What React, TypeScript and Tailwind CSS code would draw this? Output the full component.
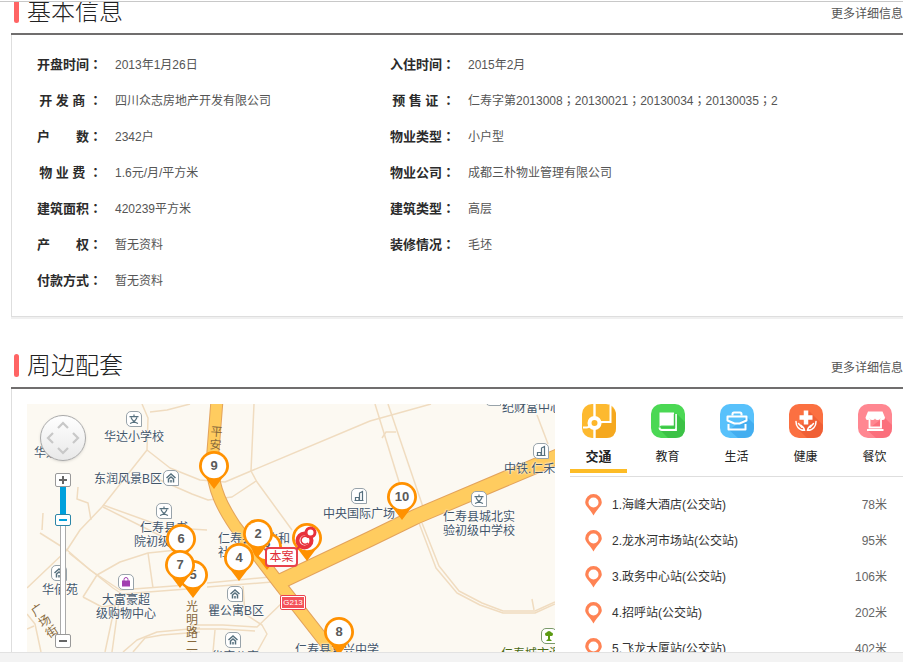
import React, { useState } from "react";

type Field = { label: string; value: string };

const fields: Field[] = [
  { label: "开盘时间：", value: "2013年1月26日" },
  { label: "入住时间：", value: "2015年2月" },
  { label: "开 发 商 ：", value: "四川众志房地产开发有限公司" },
  { label: "预 售 证 ：", value: "仁寿字第2013008；20130021；20130034；20130035；2" },
  { label: "户　　数：", value: "2342户" },
  { label: "物业类型：", value: "小户型" },
  { label: "物 业 费 ：", value: "1.6元/月/平方米" },
  { label: "物业公司：", value: "成都三朴物业管理有限公司" },
  { label: "建筑面积：", value: "420239平方米" },
  { label: "建筑类型：", value: "高层" },
  { label: "产　　权：", value: "暂无资料" },
  { label: "装修情况：", value: "毛坯" },
  { label: "付款方式：", value: "暂无资料" },
];

const stations = [
  { name: "海峰大酒店(公交站)", distance: "78米" },
  { name: "龙水河市场站(公交站)", distance: "95米" },
  { name: "政务中心站(公交站)", distance: "106米" },
  { name: "招呼站(公交站)", distance: "202米" },
  { name: "飞龙大厦站(公交站)", distance: "402米" },
];

/* Full-width colons and semicolons sit in the middle of their square. */
function CenteredPunctuation({ text }: { text: string }) {
  return (
    <>
      {text.split(/([：；])/).map((part, i) =>
        part === "：" || part === "；" ? (
          <span key={i} lang="zh-Hant" className="font-['Noto_Sans_CJK_TC',sans-serif] leading-none">
            {part}
          </span>
        ) : (
          part
        ),
      )}
    </>
  );
}

function SectionHeader({ title }: { title: string }) {
  return (
    <header className="flex h-[35px] items-start justify-between border-b-2 border-[#706e6e] pl-[3px]">
      <div className="flex items-center gap-2">
        <span className="h-[23px] w-[5px] rounded-sm bg-[#ff6464]" />
        <h2 className="text-2xl leading-[23px] font-light text-[#222]">{title}</h2>
      </div>
      <a href="#more" className="text-xs leading-7 text-[#555]">
        更多详细信息
      </a>
    </header>
  );
}

/* ---------- category icons ---------- */

function TrafficIcon() {
  return (
    <svg viewBox="0 0 34 34" className="size-[34px]">
      <rect width="34" height="34" rx="10" fill="#fdb92f" />
      <path d="M17 24l4-5h8V3q5 3 5 8v13q0 10-10 10H13v-8z" fill="#f5a81f" />
      <path d="M12.500 0v34" stroke="#fff" strokeWidth="2.400" />
      <path d="M18 18h10.500V1M1 23.500h3.500q2.500 0 3-2" fill="none" stroke="#fff" strokeWidth="2" />
      <circle cx="12.500" cy="19" r="5" fill="#fdb62b" stroke="#fff" strokeWidth="4" />
    </svg>
  );
}

function SchoolIcon() {
  return (
    <svg viewBox="0 0 34 34" className="size-[34px]">
      <rect width="34" height="34" rx="10" fill="#4bd854" />
      <path d="M26 10l8 8v6q0 10-10 10h-7l-8-8 16-1z" fill="#3cc246" />
      <path d="M8.500 8.500h14.500v13H10.500q-2 0-2 2z" fill="#fff" />
      <path d="M25 10v16H11q-2.500 0-2.500-2.500" fill="none" stroke="#fff" strokeWidth="1.800" />
      <path d="M10 23.300h13.500V10" fill="none" stroke="#3cc246" strokeWidth="1.400" />
    </svg>
  );
}

function LifeIcon() {
  return (
    <svg viewBox="0 0 34 34" className="size-[34px]">
      <rect width="34" height="34" rx="10" fill="#58c1fb" />
      <path d="M27 13l7 7v4q0 10-10 10h-6l-9-8z" fill="#43aef0" />
      <g fill="none" stroke="#fff" strokeWidth="2">
        <path d="M12.500 11.500V10q0-1.500 1.500-1.500h6q1.500 0 1.500 1.500v1.500" />
        <path d="M7.500 12.500h19v4l-7 3h-5l-7-3z" strokeLinejoin="round" />
        <path d="M8.500 20v5.500h17V20" strokeLinejoin="round" />
      </g>
    </svg>
  );
}

function HealthIcon() {
  return (
    <svg viewBox="0 0 34 34" className="size-[34px]">
      <rect width="34" height="34" rx="10" fill="#fb7041" />
      <path d="M20 7l14 14v3q0 10-10 10h-6l-8-8z" fill="#f05f35" />
      <path d="M17 6.500v14M10.500 13.500h13" stroke="#fff" strokeWidth="4.500" />
      <path
        d="M7 17.500q0 4 2 6 2.500 3 6.500 2.800-.3-3-3.500-5M27 17.500q0 4-2 6-2.500 3-6.500 2.800.3-3 3.500-5M9.500 19.500l3.500 4M24.500 19.500l-3.500 4"
        fill="none"
        stroke="#fff"
        strokeWidth="1.500"
        strokeLinecap="round"
      />
    </svg>
  );
}

function FoodIcon() {
  return (
    <svg viewBox="0 0 34 34" className="size-[34px]">
      <rect width="34" height="34" rx="10" fill="#ff8791" />
      <path d="M26 13l8 8v3q0 10-10 10h-6l-9-8z" fill="#fb6f7c" />
      <path
        d="M10 7.500h14.500l2.500 6q0 2.500-2.200 2.500t-2.600-1.500q-.5 1.500-2.600 1.500T17 14.500q-.5 1.500-2.600 1.500t-2.600-1.500Q11.400 16 9.500 16T7.500 13.500z"
        fill="#fff"
      />
      <path d="M11.500 15v8.500h11.500V15M9 26h16.500" fill="none" stroke="#fff" strokeWidth="1.800" />
    </svg>
  );
}

const tabs = [
  { name: "交通", Icon: TrafficIcon },
  { name: "教育", Icon: SchoolIcon },
  { name: "生活", Icon: LifeIcon },
  { name: "健康", Icon: HealthIcon },
  { name: "餐饮", Icon: FoodIcon },
];

function StationPin() {
  return (
    <svg viewBox="0 0 17 22" className="h-[22px] w-[17px] shrink-0">
      <path
        d="M8.500 0a8.300 8.300 0 0 1 8.300 8.300c0 4-4.800 6.700-8.300 13.200C5 15 .2 12.300.2 8.300A8.300 8.300 0 0 1 8.500 0z"
        fill="#ff8354"
      />
      <circle cx="8.500" cy="8.500" r="5" fill="#fff" />
    </svg>
  );
}

/* ---------- map ---------- */

const lanes = [
  "115,0 121,14 120,46 75,103 53,126 40,146 0,184",
  "120,46 143,64 173,76 198,78 224,67 343,17 404,0",
  "126,73 165,90 181,96 205,93 229,77",
  "123,8 140,6 163,0",
  "51,83 50,95 61,99 64,116",
  "76,101 126,119",
  "76,103 118,124 150,140",
  "16,109 15,126",
  "13,129 40,146 63,166 93,186 173,180",
  "42,149 86,184 95,190 173,184",
  "56,193 70,171 93,158 121,149 150,146",
  "121,149 126,184",
  "56,193 75,203 88,201 78,248",
  "93,190 85,248",
  "96,248 110,236 130,228 173,224",
  "106,248 118,234 135,231 173,228",
  "0,210 8,220 14,248",
  "0,225 7,222",
  "227,0 224,67 230,78 265,126",
  "180,179 243,173",
  "180,183 245,178",
  "163,125 180,126",
  "216,182 218,210 235,221 240,230 230,248",
  "163,221 196,221 230,223 256,198",
  "163,225 195,225 228,227",
  "188,226 186,248",
  "348,0 373,81",
  "361,0 396,103",
  "355,34 359,28 369,28",
  "510,11 521,40",
  "472,71 475,81",
  "396,103 380,114",
  "392,119 409,164 430,189 453,201 476,209 508,209 528,200",
  "395,119 412,162 432,187 455,199 476,207 508,207 528,198",
  "505,195 507,206",
];

const highways = [
  { d: "M190 -4L185 60C186 86 196 104 208 122L254 182L312 256", width: 13 },
  { d: "M248 180L343 135L388 113L532 52", width: 16 },
];

type PoiKind = "school" | "house" | "tower" | "bag" | "tree";

const pois: { kind: PoiKind; x: number; y: number }[] = [
  { kind: "school", x: 107, y: 15 },
  { kind: "house", x: 144, y: 74 },
  { kind: "school", x: 137, y: 107 },
  { kind: "house", x: 32, y: 169 },
  { kind: "bag", x: 99, y: 178 },
  { kind: "house", x: 208, y: 190 },
  { kind: "house", x: 206, y: 236 },
  { kind: "tower", x: 332, y: 92 },
  { kind: "tower", x: 514, y: 47 },
  { kind: "school", x: 452, y: 95 },
  { kind: "tower", x: 466, y: -6 },
  { kind: "tree", x: 522, y: 232 },
];

function PoiGlyph({ kind }: { kind: PoiKind }) {
  switch (kind) {
    case "school":
      return (
        <path
          d="M8 3.500v2M3.500 5.700h9M5 6.500q2 4.500 7 6M11 6.500q-2 4.500-7 6"
          fill="none"
          stroke="#56707e"
          strokeWidth="1.200"
        />
      );
    case "house":
      return (
        <path
          d="M3.500 8L8 4l4.500 4M5.500 12.500V9L8 7l2.500 2v3.500M8 10v2.500"
          fill="none"
          stroke="#56707e"
          strokeWidth="1.500"
        />
      );
    case "tower":
      return (
        <path
          d="M3.500 12.500h9M4.500 12V9.500H8V12M8.500 12V5l3-1.500V12"
          fill="none"
          stroke="#56707e"
          strokeWidth="1.200"
        />
      );
    case "bag":
      return (
        <>
          <path d="M4 6.500h8v6H4z" fill="#a23fb0" />
          <path d="M6 8V5.500a2 2 0 0 1 4 0V8" fill="none" stroke="#a23fb0" />
        </>
      );
    case "tree":
      return (
        <path
          d="M4 6q0-1.500 1.500-1.500Q6.500 3 8 3t2.500 1.500Q12 4.500 12 6.200T10.500 8H9v3l2 2H5l2-2V8H5.500Q4 7.800 4 6z"
          fill="#5b9a12"
        />
      );
  }
}

const labels: { text: string; x: number; y: number; park?: boolean }[] = [
  { text: "华达小学校", x: 77, y: 25 },
  { text: "华达", x: 7, y: 41 },
  { text: "东润风景B区", x: 67, y: 67 },
  { text: "仁寿县书", x: 113, y: 116 },
  { text: "院初级中", x: 107, y: 130 },
  { text: "华佰苑", x: 15, y: 178 },
  { text: "大富豪超", x: 75, y: 188 },
  { text: "级购物中心", x: 69, y: 202 },
  { text: "瞿公寓B区", x: 181, y: 199 },
  { text: "华府公寓", x: 184, y: 245 },
  { text: "仁寿县城北和", x: 191, y: 127 },
  { text: "社区", x: 191, y: 141 },
  { text: "中央国际广场", x: 296, y: 102 },
  { text: "中铁.仁禾", x: 477, y: 57 },
  { text: "仁寿县城北实", x: 416, y: 105 },
  { text: "验初级中学校", x: 416, y: 119 },
  { text: "纪财富中心", x: 475, y: -4 },
  { text: "仁寿县复兴中学", x: 268, y: 238 },
  { text: "仁寿城市湿地", x: 474, y: 242, park: true },
];

const streetNames = [
  { text: "平安", x: 183, y: 22, turn: 4 },
  { text: "光明路二段", x: 159, y: 197, turn: 0 },
  { text: "广场街", x: 12, y: 198, turn: -34 },
];

const markers = [
  { id: "9", x: 187, y: 62 },
  { id: "10", x: 375, y: 93 },
  { id: "3", x: 240, y: 143 },
  { id: "2", x: 231, y: 130 },
  { id: "4", x: 212, y: 154 },
  { id: "6", x: 154, y: 135 },
  { id: "5", x: 166, y: 171 },
  { id: "7", x: 153, y: 161 },
  { id: "8", x: 312, y: 228 },
];

function MarkerShape() {
  return (
    <svg viewBox="0 0 32 40" className="absolute inset-0 h-10 w-8">
      <path d="M16 1a15 15 0 0 1 15 15c0 6-4 10-7 12.500L16 39l-8-10.500C5 26 1 22 1 16A15 15 0 0 1 16 1z" fill="#ff9100" />
      <circle cx="16" cy="16" r="12.200" fill="#fff" />
    </svg>
  );
}

function MapControls() {
  return (
    <div className="absolute top-[11px] left-3 flex w-12 flex-col items-center">
      <div className="rounded-full border border-[#aaa] bg-gradient-to-b from-white to-[#e9e9e9] shadow-sm">
        <svg viewBox="0 0 44 44" className="size-11">
          <path
            d="M17 12l5-5 5 5M17 32l5 5 5-5M12 17l-5 5 5 5M32 17l5 5-5 5"
            fill="none"
            stroke="#c8c8c8"
            strokeWidth="2.200"
          />
        </svg>
      </div>
      <button
        type="button"
        aria-label="放大"
        className="mt-3 flex h-3.5 w-4 items-center justify-center rounded-xs border border-[#999] bg-white"
      >
        <svg viewBox="0 0 10 10" className="size-2.5">
          <path d="M5 1v8M1 5h8" stroke="#666" strokeWidth="2" />
        </svg>
      </button>
      <div className="relative flex h-[147px] w-4 flex-col items-center">
        <div className="h-[27px] w-1.5 bg-[#00a0dc]" />
        <div className="flex h-3 w-4 items-center justify-center rounded-xs border border-[#2c86a8] bg-white">
          <span className="h-0.5 w-2 bg-[#00a0dc]" />
        </div>
        <div className="w-1.5 flex-1 border-x border-[#aaa] bg-white" />
        <input
          type="range"
          aria-label="地图缩放"
          min={3}
          max={18}
          defaultValue={15}
          className="absolute inset-0 h-full w-full opacity-0 [writing-mode:vertical-lr]"
        />
      </div>
      <button
        type="button"
        aria-label="缩小"
        className="flex h-3.5 w-4 items-center justify-center rounded-xs border border-[#999] bg-white"
      >
        <span className="h-0.5 w-2 bg-[#666]" />
      </button>
    </div>
  );
}

function AreaMap() {
  return (
    <div className="relative h-[360px] w-[528px] shrink-0 overflow-hidden bg-[#fcf9f2]">
      <svg viewBox="0 0 528 360" className="absolute inset-0 h-[360px] w-[528px]">
        <g fill="none" stroke="#f0dcc0" strokeWidth="1.500" strokeLinejoin="round">
          {lanes.map((points) => (
            <polyline key={points} points={points} />
          ))}
        </g>
        <g fill="none" stroke="#e3a35c">
          {highways.map(({ d, width }) => (
            <path key={d} d={d} strokeWidth={width} />
          ))}
        </g>
        <g fill="none" stroke="#ffcc5f">
          {highways.map(({ d, width }) => (
            <path key={d} d={d} strokeWidth={width - 2} />
          ))}
        </g>
        {pois.map(({ kind, x, y }) => (
          <g key={`${x}-${y}`} transform={`translate(${x - 8} ${y - 8})`}>
            <path
              d="M5 .5h6a4.500 4.500 0 0 1 4.500 4.500v10.500H5A4.500 4.500 0 0 1 .5 11V5A4.500 4.500 0 0 1 5 .5z"
              fill="#fff"
              stroke={kind === "tree" ? "#7a9a6a" : "#98a3aa"}
            />
            <PoiGlyph kind={kind} />
          </g>
        ))}
      </svg>

      {labels.map(({ text, x, y, park }) => (
        <span
          key={`${text}-${x}`}
          className={`absolute text-xs leading-4 whitespace-nowrap [text-shadow:0_0_2px_#fff,0_0_2px_#fff] ${
            park ? "text-[#4a6a14]" : "text-[#43566a]"
          }`}
          style={{ left: x, top: y }}
        >
          {text}
        </span>
      ))}

      {streetNames.map(({ text, x, y, turn }) => (
        <span
          key={text}
          className="absolute w-3 text-center text-xs leading-[13px] break-all text-[#86683c]"
          style={{ left: x, top: y, rotate: `${turn}deg` }}
        >
          {text}
        </span>
      ))}

      <span className="absolute top-[191px] left-[253px] flex h-[15px] w-[26px] items-center justify-center rounded-xs border border-[#e8444e] bg-white p-px">
        <span className="flex h-full w-full items-center justify-center bg-[#f4515a] text-[8px] leading-none text-white">
          G213
        </span>
      </span>

      {markers.map(({ id, x, y }) => (
        <button
          key={id}
          type="button"
          className="absolute h-10 w-8 text-[13px] font-bold text-[#5a5a5a]"
          style={{ left: x - 16, top: y - 16 }}
        >
          <MarkerShape />
          <span className="absolute inset-x-0 top-0 leading-8">{id}</span>
        </button>
      ))}

      <button type="button" aria-label="本案位置" className="absolute top-[118px] left-[264px] h-10 w-8">
        <MarkerShape />
        <svg viewBox="0 0 32 40" className="absolute inset-0 h-10 w-8">
          <path d="M9 24L2 31" stroke="#e8323c" strokeWidth="2" />
          <circle cx="13.500" cy="18.500" r="7" fill="#fff" stroke="#e8323c" strokeWidth="4" />
          <circle cx="19.500" cy="10.500" r="4.500" fill="#fff" stroke="#e8323c" strokeWidth="3" />
          <path d="M17 15.500a4 4 0 1 0 0 5.500" fill="none" stroke="#e8323c" strokeWidth="1.500" />
        </svg>
      </button>
      <span className="absolute top-[143px] left-[238px] flex h-5 w-[33px] items-center justify-center rounded-sm border-2 border-[#e8414b] bg-white text-xs text-[#e02a34]">
        本案
      </span>

      <MapControls />
    </div>
  );
}

/* ---------- page ---------- */

export default function App() {
  const [active, setActive] = useState("交通");

  return (
    <div className="flex h-screen flex-col overflow-hidden bg-white font-['Liberation_Sans','Noto_Sans_CJK_SC',sans-serif] text-[#555]">
      <div className="h-0.5 shrink-0 border-b border-[#c8c8c8]" />
      <main className="min-h-0 flex-1 overflow-hidden pl-[11px]">
        <section className="-mt-0.5">
          <SectionHeader title="基本信息" />
          <div className="border-b border-l border-[#dedede] pt-3 pb-[17px] pl-[25px] shadow-[0_2px_0_#f0f0f0]">
            <dl className="grid grid-cols-[353px_1fr]">
              {fields.map(({ label, value }) => (
                <div key={label} className="flex h-9 items-center gap-[13px] whitespace-nowrap">
                  <dt className="w-[65px] shrink-0 text-right text-[13px] font-bold text-[#2b2b2b]">
                    <CenteredPunctuation text={label} />
                  </dt>
                  <dd className="text-xs">
                    <CenteredPunctuation text={value} />
                  </dd>
                </div>
              ))}
            </dl>
          </div>
        </section>

        <section className="mt-[37px]">
          <SectionHeader title="周边配套" />
          <div className="flex gap-[15px] border-l border-[#dedede] pt-[15px] pl-[15px]">
            <AreaMap />
            <div className="min-w-0 flex-1">
              <div role="tablist" className="flex gap-3 border-b border-[#dedede] pb-[3px]">
                {tabs.map(({ name, Icon }) => (
                  <button
                    key={name}
                    type="button"
                    role="tab"
                    aria-selected={active === name}
                    onClick={() => setActive(name)}
                    className={`flex w-[57px] shrink-0 flex-col items-center gap-[9px] border-b-4 pb-0.5 text-[#222] ${
                      active === name ? "border-[#fdbc26] text-[13px] font-bold" : "border-transparent text-xs"
                    }`}
                  >
                    <Icon />
                    <span className="leading-5">{name}</span>
                  </button>
                ))}
              </div>
              <ol className="pt-2.5 pr-4 pl-[15px]">
                {stations.map(({ name, distance }, i) => (
                  <li key={name} className="flex h-9 items-center text-xs">
                    <StationPin />
                    <a href={"#station-" + (i + 1)} className="ml-2.5 flex-1 text-[#333]">
                      {i + 1}.{name}
                    </a>
                    <span className="text-[#666]">{distance}</span>
                  </li>
                ))}
              </ol>
            </div>
          </div>
        </section>
      </main>
      <footer className="h-2.5 shrink-0 border-t border-[#e2e2e2] bg-[#f3f3f3]" />
    </div>
  );
}
